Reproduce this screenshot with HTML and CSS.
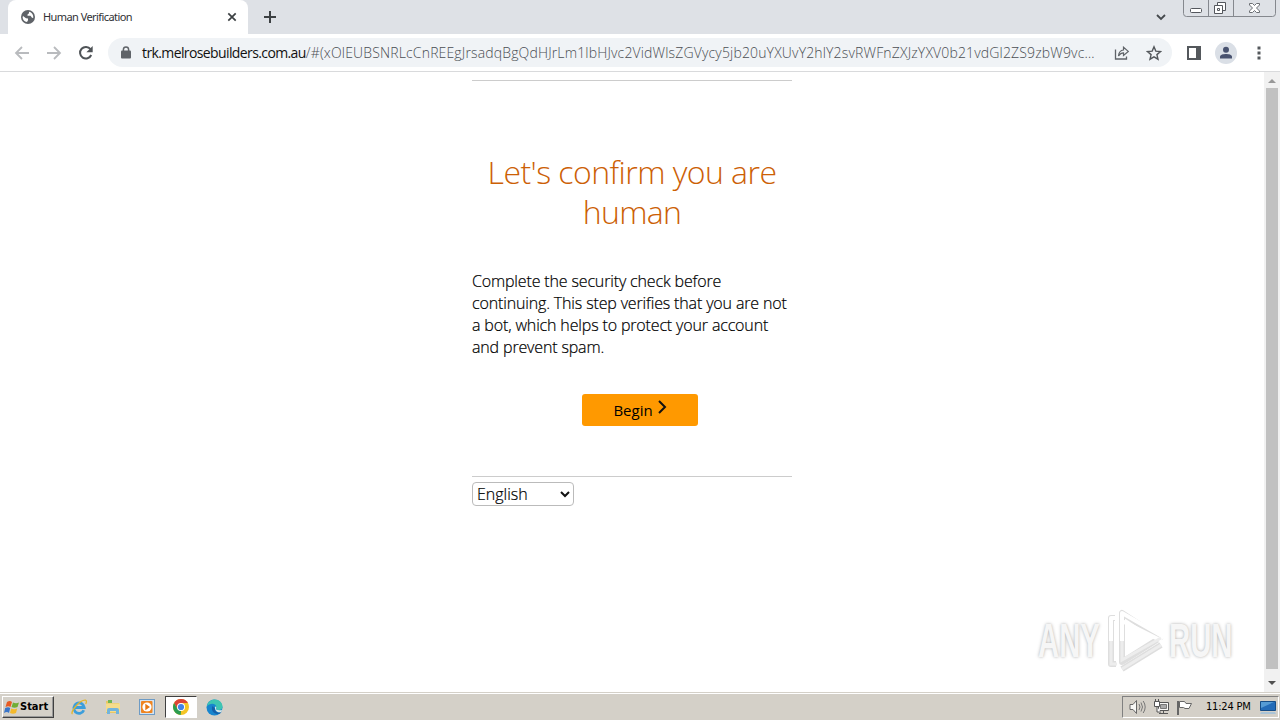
FILE: index.html
```html
<!DOCTYPE html>
<html lang="en">
<head>
    <meta charset="UTF-8">
    <meta name="viewport" content="width=device-width, initial-scale=1.0">
    <title>Human Verification</title>
    <link rel="stylesheet" href="styles.css">
</head>
<body>
    <div class="tabstrip">
        <div class="tab">
            <svg class="globe" width="14" height="14" viewBox="0 0 14 14">
                <circle cx="7" cy="7" r="7" fill="#5f6368"/>
                <path d="M2 6l3 2.2 2 .3v1.700L6 12C3.400 11.600 1.800 9.600 1.600 7.200zM8 1.800v1.500L6.500 4.500v1.300h3L11 7.700l1.200.4C12.700 5 11 2.500 8 1.800z" fill="#fff"/>
            </svg>
            <span class="tab-title">Human Verification</span>
            <svg class="tab-close" width="10" height="10" viewBox="0 0 10 10"><path d="M1.300 1.300l7.400 7.400M8.700 1.300L1.300 8.700" stroke="#3c4043" stroke-width="1.700"/></svg>
        </div>
        <svg class="new-tab" width="12" height="12" viewBox="0 0 12 12"><path d="M6 0v12M0 6h12" stroke="#3c4043" stroke-width="2"/></svg>
        <svg class="tab-search" width="10" height="7" viewBox="0 0 10 7"><path d="M1 1l4 4 4-4" fill="none" stroke="#45494d" stroke-width="1.800"/></svg>
        <svg class="window-buttons" width="93" height="17" viewBox="0 0 93 17">
            <path d="M.5 0v13.500q0 3 3 3h86q3 0 3-3V0M25.500 0v16M50.500 0v16" fill="none" stroke="#85888e"/>
            <rect x="7.500" y="8.500" width="11" height="4" rx="1" fill="#fff" stroke="#54575d"/>
            <path d="M34.500 2.500h8v8h-8z" fill="#fff" stroke="#54575d"/>
            <path d="M31.500 5.500h8v8h-8z" fill="#fff" stroke="#54575d"/>
            <path d="M34.500 8.500h2v2h-2z" fill="none" stroke="#54575d"/>
            <path d="M66.500 3.500h3l2 2 2-2h3v1.500l-3 3 3 3v1.500h-3l-2-2-2 2h-3V11l3-3-3-3z" fill="#fff" stroke="#6b6e73"/>
        </svg>
    </div>

    <div class="toolbar">
        <svg class="nav-icon" width="16" height="16" viewBox="0 0 16 16"><path d="M15 8H2M8 2L2 8l6 6" fill="none" stroke="#b9bbbe" stroke-width="1.800"/></svg>
        <svg class="nav-icon" width="16" height="16" viewBox="0 0 16 16"><path d="M1 8h13M8 2l6 6-6 6" fill="none" stroke="#b9bbbe" stroke-width="1.800"/></svg>
        <svg class="nav-icon" width="16" height="16" viewBox="0 0 16 16"><path d="M13.200 10A5.800 5.800 0 1 1 12.500 4.200" fill="none" stroke="#4f5357" stroke-width="2"/><path d="M14.700 1v6.300H8.400z" fill="#4f5357"/></svg>
        <div class="omnibox">
            <svg class="lock" width="10" height="13" viewBox="0 0 10 13"><rect y="4.500" width="10" height="8" rx="1" fill="#5f6368"/><path d="M2.400 5V3.500a2.600 2.600 0 0 1 5.200 0V5" fill="none" stroke="#5f6368" stroke-width="1.500"/></svg>
            <div class="url"><span class="host">trk.melrosebuilders.com.au</span><span class="path">/#(xOlEUBSNRLcCnREEgJrsadqBgQdHJrLm1lbHJvc2VidWlsZGVycy5jb20uYXUvY2hlY2svRWFnZXJzYXV0b21vdGl2ZS9zbW9vc&hellip;</span></div>
            <svg class="share" width="16" height="14" viewBox="0 0 16 14"><path d="M1.500 3.500v9.500h11V10.500" fill="none" stroke="#5f6368" stroke-width="1.300"/><path d="M4.500 10C4.800 6.500 6.500 4.300 9.500 4V1.200L14.300 5.400 9.500 9.500V6.800C7.500 6.800 5.800 8 4.500 10z" fill="none" stroke="#5f6368" stroke-width="1.200"/></svg>
            <svg class="star" width="16" height="16" viewBox="0 0 16 16"><path d="M8 1.800l1.800 4.300 4.700.4-3.600 3.100 1.100 4.600L8 11.800l-4 2.400 1.100-4.600L1.500 6.500l4.700-.4z" fill="none" stroke="#54585c" stroke-width="1.400"/></svg>
        </div>
        <svg class="panel" width="14" height="14" viewBox="0 0 14 14"><path d="M1 1h12v12H1z" fill="#fff" stroke="#54585c" stroke-width="2"/><path d="M9 0h5v14H9z" fill="#54585c"/></svg>
        <svg class="avatar" width="22" height="22" viewBox="0 0 22 22"><circle cx="11" cy="11" r="11" fill="#dadfe6"/><circle cx="11" cy="7.800" r="3" fill="#48526f"/><path d="M5 16.500v-1.700C5 12.500 8.500 11.900 11 11.900s6 .6 6 2.900v1.700z" fill="#48526f"/></svg>
        <svg class="menu" width="4" height="14" viewBox="0 0 4 14"><path d="M.5.500h3v3h-3zM.5 5.500h3v3h-3zM.5 10.500h3v3h-3z" fill="#54585c"/></svg>
    </div>

    <div class="viewport">
        <main class="content">
            <hr>
            <h1><span class="h-one">Let's confirm you are</span><br><span class="h-two">human</span></h1>
            <p>Complete the security check before<br>continuing. This step verifies that you are not<br>a bot, which helps to protect your account<br>and prevent spam.</p>
            <button class="begin"><span>Begin</span><svg width="9" height="14" viewBox="0 0 9 14"><path d="M1 1l6 6-6 6" fill="none" stroke="#111" stroke-width="2"/></svg></button>
            <hr>
            <div class="language"><span>English</span><svg width="10" height="7" viewBox="0 0 10 7"><path d="M1 1l4 4 4-4" fill="none" stroke="#111" stroke-width="2"/></svg></div>
        </main>
        <div class="scrollbar">
            <svg width="8" height="4" viewBox="0 0 8 4"><path d="M0 4l4-4 4 4z" fill="#989898"/></svg>
            <div class="thumb"></div>
            <svg width="8" height="4" viewBox="0 0 8 4"><path d="M0 0l4 4 4-4z" fill="#505050"/></svg>
        </div>
        <div class="watermark">
            <span class="wm-any">ANY</span>
            <svg width="60" height="64" viewBox="0 0 60 64">
                <g fill="none" stroke="#dedede" stroke-width="6" stroke-linejoin="round"><path d="M17 4v49l38-24z"/><path d="M10 9H6v46h5M17 60l39-24"/></g>
                <g fill="none" stroke="#fff" stroke-width="4" stroke-linejoin="round"><path d="M17 32V4l40 23-2 4L17 12M10 9H6v23"/></g>
                <g fill="none" stroke="#ededed" stroke-width="3"><path d="M17 32v19l39-22M6 32v23h6M17 60l39-24"/></g>
            </svg>
            <span class="wm-run">RUN</span>
        </div>
    </div>

    <div class="taskbar">
        <div class="start">
            <svg width="16" height="15" viewBox="0 0 16 15"><path d="M3 2q3-2 5 0L6.500 7Q4.500 5.500 1.500 7z" fill="#e75b23"/><path d="M9 2.500q3 1.500 6 0L13.500 7q-3 1.500-6 0z" fill="#70ad35"/><path d="M1.200 8q3-1.500 5 0L5 13q-2-2-5 0z" fill="#3975c9"/><path d="M7.200 8.500q3 1.500 6 0L12 13q-3 1.500-6 0z" fill="#f4b92b"/></svg>
            <span>Start</span>
        </div>
        <svg class="ie" width="18" height="18" viewBox="0 0 18 18"><path d="M13.800 12.300A5.200 5.200 0 1 1 14.200 9.500H5" fill="none" stroke="#3c9edb" stroke-width="2.800"/><path d="M2.500 16C-.5 14.500 10 1.500 15.500 2.200c1.500.4.8 2.600.2 3.800" fill="none" stroke="#e4b62c" stroke-width="1.300"/></svg>
        <svg class="explorer" width="16" height="16" viewBox="0 0 16 16"><path d="M1 2h5l1 2h7v10H1z" fill="#e8c765"/><path d="M3 1h4v3H3z" fill="#6fb653"/><path d="M1 4.500h14V13H1z" fill="#f5dc8c"/><path d="M2 15v-4q0-2 2-2h8q2 0 2 2v4h-3v-3H5v3z" fill="#72b4dc"/></svg>
        <svg class="player" width="16" height="16" viewBox="0 0 16 16"><rect x=".5" y=".5" width="15" height="15" fill="#d5e4f1" stroke="#6d9bc5"/><rect x="2" y="2" width="11.500" height="12" rx="1" fill="#ef8521"/><circle cx="8" cy="8" r="4.600" fill="#fff"/><path d="M6.300 4.800L11 8l-4.700 3.200z" fill="#e67712"/></svg>
        <div class="task-active">
            <svg width="16" height="16" viewBox="0 0 16 16"><circle cx="8" cy="8" r="8" fill="#f4c525"/><path d="M1.070 4A8 8 0 0 1 14.930 4H8L4.540 10z" fill="#dc4437"/><path d="M1.070 4l3.470 6L8 12l-.3 4A8 8 0 0 1 1.070 4z" fill="#2b9c50"/><circle cx="8" cy="8" r="4" fill="#fff"/><circle cx="8" cy="8" r="3.100" fill="#4283e8"/></svg>
        </div>
        <svg class="edge" width="17" height="17" viewBox="0 0 17 17"><circle cx="8.500" cy="8.500" r="8" fill="#1785ce"/><path d="M.7 7.500C2 2.500 5 .5 8.500.5c5 0 8 3.500 8 7 0 3-2.500 4.200-5.500 3.200-1.500-.6-.5-1.700-.7-2.700C9.800 3.800 3.500 4 .7 7.500z" fill="#3ec5b2"/><path d="M6.500 7c-2 4 1 8 5.500 8 1.500 0 2.700-.8 3.500-2-3 1.500-7 .3-6.500-3.500z" fill="#155fa9"/><path d="M9 7.500c1 0 1.700.8 1 2.200-.4 1 1.800 1.900 6 1.300l-.7 2c-3.300 1-6.800-1-6.300-5.500z" fill="#dce9e7"/></svg>
        <div class="tray">
            <svg class="volume" width="17" height="14" viewBox="0 0 17 14"><path d="M1 4.500h3l3.500-4v13L4 9.500H1z" fill="#f7f7f5" stroke="#666"/><path d="M10 4q2 3 0 6M12 2.500q3 4.500 0 9M14.200 1q4 6 0 12" fill="none" stroke="#777"/></svg>
            <svg class="network" width="17" height="16" viewBox="0 0 17 16"><path d="M5.500 3.500h10v8h-10z" fill="#f8f8f6" stroke="#555"/><path d="M7.500 5.500h6v4h-6z" fill="#aaa" stroke="#777"/><path d="M6 14.500h9M10.500 12v3" stroke="#555"/><path d="M1.500 2.500h5v5h-5zM2.500 0v3M5.500 0v3M4 8v5h4" fill="#fff" stroke="#555"/></svg>
            <svg class="flag" width="16" height="15" viewBox="0 0 16 15"><path d="M2 15V1" stroke="#666" stroke-width="2"/><path d="M3.500 1.500h5l1.500 2h5.500L13 8.500H9l-1.500-1h-4z" fill="#fff" stroke="#666"/></svg>
            <span class="clock">11:24 PM</span>
            <svg class="desktop" width="16" height="14" viewBox="0 0 16 14"><path d="M.5 1.500h15v9H.5z" fill="#236bb8" stroke="#164d87"/><path d="M1 2h13L1 8z" fill="#559bd5"/><path d="M1 12h14l1 2H0z" fill="#aac4d7"/></svg>
        </div>
    </div>
</body>
</html>
```
FILE: styles.css
```css
* {
    box-sizing: border-box;
}

body {
    margin: 0;
    width: 1280px;
    height: 720px;
    overflow: hidden;
    background: #fff;
    color: #000;
    font-family: "Open Sans", sans-serif;
    display: flex;
    flex-direction: column;
}

svg {
    display: block;
    flex: none;
}

/* browser frame */
.tabstrip {
    height: 34px;
    background: #dee1e6;
    display: flex;
    align-items: flex-start;
    padding-left: 8px;
    flex: none;
}

.tab {
    width: 240px;
    height: 34px;
    background: #fff;
    border-radius: 8px 8px 0 0;
    display: flex;
    align-items: center;
    padding: 0 11px 0 13px;
}

.tab-title {
    font: 11px/16px "Noto Sans", sans-serif;
    letter-spacing: -0.57px;
    color: #303134;
    margin-left: 8px;
    white-space: nowrap;
}

.tab-close {
    margin-left: auto;
}

.new-tab {
    margin: 11px 0 0 16px;
}

.tab-search {
    margin: 14px 17px 0 auto;
}

.window-buttons {
    margin-right: 4px;
}

.toolbar {
    height: 38px;
    border-bottom: 1px solid #d9dadc;
    display: flex;
    align-items: center;
    padding-left: 14px;
    flex: none;
}

.nav-icon {
    margin-right: 16px;
}

.omnibox {
    width: 1064px;
    height: 29px;
    margin-left: -2px;
    border-radius: 15px;
    background: #f0f3f6;
    display: flex;
    align-items: center;
    padding: 0 10px 0 13px;
}

.url {
    width: 956px;
    margin-left: 11px;
    font: 300 14px/20px "Open Sans", sans-serif;
    color: #4a4e53;
    white-space: nowrap;
}

.host {
    color: #111;
    font-weight: 400;
    letter-spacing: -0.61px;
}

.path {
    letter-spacing: 0.155px;
}

.share {
    margin-left: auto;
}

.star {
    margin-left: 16px;
}

.panel {
    margin-left: 15px;
}

.avatar {
    margin-left: 14px;
}

.menu {
    margin-left: 20px;
}

/* page */
.viewport {
    height: 620px;
    display: flex;
    position: relative;
    flex: none;
}

.content {
    width: 320px;
    margin: 8px auto 0 472px;
}

hr {
    border: 0;
    height: 1px;
    margin: 0;
    background: #ccc;
}

h1 {
    margin: 71px 0 0;
    font-size: 32px;
    line-height: 40px;
    font-weight: 300;
    text-align: center;
    color: #cc6005;
    white-space: nowrap;
}

.h-one {
    letter-spacing: -0.55px;
}

.h-two {
    letter-spacing: -0.7px;
}

.content p {
    margin: 38px 0 0;
    font-size: 16px;
    font-weight: 300;
    line-height: 22px;
    letter-spacing: -0.15px;
    white-space: nowrap;
    -webkit-text-stroke: 0.2px #000;
}

.begin {
    width: 116px;
    height: 32px;
    margin: 36px 0 50px 110px;
    padding: 0;
    border: 0;
    border-radius: 3px;
    background: #ff9900;
    color: #000;
    font: 15px/20px "Open Sans", sans-serif;
    display: flex;
    justify-content: center;
    align-items: center;
    gap: 5px;
}

.begin svg {
    margin-bottom: 6px;
}

.language {
    width: 102px;
    height: 24px;
    margin-top: 5px;
    padding: 0 3px 0 4px;
    border: 1px solid #bbb;
    border-radius: 4px;
    display: flex;
    align-items: center;
    justify-content: space-between;
    font-size: 16px;
    font-weight: 300;
    -webkit-text-stroke: 0.2px #000;
}

.scrollbar {
    width: 16px;
    background: #f1f1f1;
    display: flex;
    flex-direction: column;
    align-items: center;
    padding-top: 7px;
}

.thumb {
    width: 12px;
    height: 581px;
    margin: 5px 0 12px;
    background: #c1c1c1;
}

.watermark {
    position: absolute;
    left: 1038px;
    top: 536px;
    display: flex;
    align-items: center;
    font: bold 48px/66px "Liberation Sans", sans-serif;
    color: #f6f6f6;
    text-shadow: 0 0 4px #aaa;
}

.watermark svg {
    margin: 0 4px 0 2px;
}

.wm-any,
.wm-run {
    width: 65px;
    font-family: "Liberation Sans Narrow", "Liberation Sans", sans-serif;
    transform: scaleX(0.61);
    transform-origin: left;
}

/* windows taskbar */
.taskbar {
    height: 28px;
    background: #d4d0c8;
    border-top: 1px solid #d4d0c8;
    box-shadow: inset 0 1px #fff;
    display: flex;
    align-items: center;
    padding: 1px 1px 0 2px;
    flex: none;
}

.start {
    width: 52px;
    height: 22px;
    border: 1px solid;
    border-color: #fff #404040 #404040 #fff;
    box-shadow: inset -1px -1px #999;
    display: flex;
    align-items: center;
    padding-left: 1px;
    font: bold 11px/16px "DejaVu Sans Condensed", "DejaVu Sans", sans-serif;
}

.ie {
    margin-left: 16px;
}

.explorer {
    margin-left: 17px;
}

.player {
    margin-left: 18px;
}

.task-active {
    width: 32px;
    height: 22px;
    margin-left: 10px;
    background: #fff;
    border: 1px solid;
    border-color: #404040 #fff #fff #404040;
    display: flex;
    align-items: center;
    justify-content: center;
}

.edge {
    margin-left: 9px;
}

.tray {
    width: 157px;
    height: 22px;
    margin-left: auto;
    border: 1px solid;
    border-color: #808080 #fff #fff #808080;
    display: flex;
    align-items: center;
    padding: 0 2px 0 6px;
}

.network {
    margin-left: 7px;
}

.flag {
    margin-left: 6px;
}

.clock {
    margin-left: 14px;
    font: 11px/16px "DejaVu Sans Condensed", "DejaVu Sans", sans-serif;
    letter-spacing: -0.2px;
    white-space: nowrap;
}

.desktop {
    margin-left: auto;
}
```
